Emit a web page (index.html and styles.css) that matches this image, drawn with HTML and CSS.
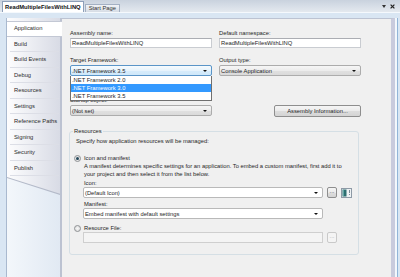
FILE: index.html
```html
<!DOCTYPE html>
<html lang="en">
<head>
    <meta charset="UTF-8">
    <meta name="viewport" content="width=device-width, initial-scale=1.0">
    <title>ReadMultipleFilesWithLINQ - Application</title>
    <link rel="stylesheet" href="styles.css">
</head>
<body>
    <div class="doc-tabs">
        <div class="doc-tab active">ReadMultipleFilesWithLINQ</div>
        <div class="doc-tab">Start Page</div>
        <div class="tab-tools">
            <svg width="4" height="3" viewBox="0 0 4 3"><path d="M0 0h4L2 3z" fill="#333"/></svg>
            <svg width="5" height="5" viewBox="0 0 5 5"><path d="M0.6 0.6l3.8 3.8M4.4 0.6l-3.8 3.8" stroke="#222" stroke-width="1.2"/></svg>
        </div>
    </div>

    <div class="frame">
        <div class="editor">
            <div class="nav">
                <ul class="nav-items">
                    <li class="selected">Application</li>
                    <li>Build</li>
                    <li>Build Events</li>
                    <li>Debug</li>
                    <li>Resources</li>
                    <li>Settings</li>
                    <li>Reference Paths</li>
                    <li>Signing</li>
                    <li>Security</li>
                    <li>Publish</li>
                </ul>
                <div class="nav-tail"></div>
            </div>

            <div class="panel">
                <div class="form-row">
                    <div class="field">
                        <div class="label">Assembly name:</div>
                        <div class="textbox">ReadMultipleFilesWithLINQ</div>
                    </div>
                    <div class="field">
                        <div class="label">Default namespace:</div>
                        <div class="textbox">ReadMultipleFilesWithLINQ</div>
                    </div>
                </div>

                <div class="form-row r2">
                    <div class="field">
                        <div class="label">Target Framework:</div>
                        <div class="combo-wrap">
                            <div class="combo focused"><span>.NET Framework 3.5</span><i class="arrow"></i></div>
                            <!-- open list -->
                            <ul class="dropdown">
                                <li>.NET Framework 2.0</li>
                                <li class="hot">.NET Framework 3.0</li>
                                <li>.NET Framework 3.5</li>
                            </ul>
                        </div>
                    </div>
                    <div class="field">
                        <div class="label">Output type:</div>
                        <div class="combo"><span>Console Application</span><i class="arrow"></i></div>
                    </div>
                </div>

                <div class="form-row r3">
                    <div class="field">
                        <div class="label">Startup object:</div>
                        <div class="combo"><span>(Not set)</span><i class="arrow"></i></div>
                    </div>
                    <div class="btn info-btn">Assembly Information...</div>
                </div>

                <fieldset class="group">
                    <legend>Resources</legend>
                    <div class="hint">Specify how application resources will be managed:</div>

                    <div class="radio-row">
                        <span class="radio checked"></span>
                        <span>Icon and manifest</span>
                    </div>
                    <div class="sub">
                        <p>A manifest determines specific settings for an application. To embed a custom manifest, first add it to<br>your project and then select it from the list below.</p>
                        <div class="label first">Icon:</div>
                        <div class="pick-row">
                            <div class="combo white"><span>(Default Icon)</span><i class="arrow"></i></div>
                            <div class="btn small">...</div>
                            <svg class="icon-preview" width="11" height="10" viewBox="0 0 11 10">
                                <rect x="0.5" y="0.5" width="10" height="9" fill="#eef2f4" stroke="#8e9aa6"/>
                                <rect x="1.5" y="1.5" width="4" height="7" fill="#2c6e70"/>
                                <rect x="2" y="2" width="1" height="6" fill="#5fa3a3"/>
                                <rect x="8" y="2" width="1" height="3" fill="#7a8a96"/>
                                <rect x="8" y="6" width="1" height="1" fill="#7a8a96"/>
                            </svg>
                        </div>
                        <div class="label second">Manifest:</div>
                        <div class="pick-row">
                            <div class="combo white"><span>Embed manifest with default settings</span><i class="arrow"></i></div>
                        </div>
                    </div>

                    <div class="radio-row second">
                        <span class="radio"></span>
                        <span>Resource File:</span>
                    </div>
                    <div class="sub">
                        <div class="pick-row">
                            <div class="textbox disabled"></div>
                            <div class="btn small disabled">...</div>
                        </div>
                    </div>
                </fieldset>
            </div>
        </div>
    </div>
</body>
</html>
```

FILE: styles.css
```css
* {
    box-sizing: border-box;
}

body {
    margin: 0;
    width: 400px;
    height: 277px;
    overflow: hidden;
    font-family: "Liberation Sans", Arial, sans-serif;
    font-size: 5.8px;
    color: #1e1e1e;
    background: #d9e6f3;
}

/* document tabs */
.doc-tabs {
    height: 12px;
    display: flex;
    align-items: flex-end;
    padding-left: 2px;
    background: linear-gradient(180deg, #c9d2de, #e4e9ef);
}

.doc-tab {
    height: 8px;
    line-height: 7px;
    padding: 0 3px;
    margin-left: 1px;
    border: 1px solid #a3b0c3;
    border-bottom: none;
    background: linear-gradient(180deg, #f1f3f6, #d6dce5);
    color: #333;
}

.doc-tab.active {
    height: 11px;
    line-height: 10px;
    margin-left: 0;
    padding: 0 2px;
    border-color: #8d9fb9;
    background: #fff;
    font-weight: bold;
    color: #111;
}

.tab-tools {
    margin-left: auto;
    align-self: center;
    display: flex;
    align-items: center;
    gap: 4px;
    padding-right: 5px;
}

/* frame */
.frame {
    height: 265px;
    padding: 5px 5px 0 6px;
    border-top: 1px solid #f5f9fd;
    background: #d9e6f3;
}

.editor {
    display: flex;
    height: 100%;
    box-shadow: 2px 0 0 #f3f7fc, 3px 0 0 #92b5d8;
}

/* left tabs */
.nav {
    flex: none;
    width: 56px;
    display: flex;
    flex-direction: column;
    background: linear-gradient(90deg, #f3f7fb, #e1e9f3);
    border-left: 1px solid #a9b9cf;
    border-right: 2px solid #bcc2d1;
}

.nav-items {
    list-style: none;
    margin: 0;
    padding: 3px 0 0;
    background: linear-gradient(90deg, #fdfdfe, #d8dbe5);
}

.nav-items li {
    height: 15.5px;
    line-height: 15px;
    padding-left: 7px;
    color: #2b2b2b;
    background: linear-gradient(#dcdee6, #dcdee6) 3px 100% / calc(100% - 4px) 1px no-repeat;
}

.nav-items li.selected {
    margin-right: -2px;
    line-height: 13.5px;
    background: #fff;
    border-top: 1px solid #c3c8d4;
    border-bottom: 1px solid #c3c8d4;
}

.nav-tail {
    height: 19px;
    position: relative;
    background: #b4bac9;
    clip-path: polygon(0 0, 100% 0, 100% 100%, 0 11%);
}

.nav-tail::before {
    content: '';
    position: absolute;
    inset: 0;
    background: linear-gradient(90deg, #fdfdfe, #d8dbe5);
    clip-path: polygon(0 0, 100% 0, 100% 94%, 0 5%);
}

/* main panel */
.panel {
    flex: 1;
    background: #f0f0f0;
    border-top: 1px solid #bcc3d2;
    border-right: 4px solid #c9cbdd;
    padding: 10px 30px 0 8px;
}

.form-row {
    display: grid;
    grid-template-columns: 1fr 1fr;
    column-gap: 7px;
}

.form-row.r2 {
    margin-top: 8px;
}

.form-row.r3 {
    margin-top: 20px;
}

.label {
    line-height: 8px;
    white-space: nowrap;
}

.textbox {
    height: 10px;
    margin-top: 1px;
    padding: 0 1px;
    line-height: 8px;
    background: #fff;
    border: 1px solid #c9ccd1;
    border-top-color: #abadb3;
}

.combo-wrap {
    position: relative;
}

.combo {
    height: 11px;
    margin-top: 1px;
    display: flex;
    align-items: center;
    justify-content: space-between;
    padding: 0 4px 0 1px;
    border: 1px solid #acacac;
    border-radius: 2px;
    background: linear-gradient(180deg, #f6f6f6, #ececec 50%, #e0e0e0 51%, #dadada);
    white-space: nowrap;
}

.combo.focused {
    border-color: #5a95c8;
    background: linear-gradient(180deg, #f6fbfe, #e6f3fc 50%, #d7ecfb 51%, #cfe8fa);
}

.combo.white {
    background: #fff;
    border-color: #b9b9b9;
}

.arrow {
    width: 0;
    height: 0;
    border-left: 2px solid transparent;
    border-right: 2px solid transparent;
    border-top: 2px solid #111;
}

.dropdown {
    position: absolute;
    top: 100%;
    left: 0;
    right: 0;
    z-index: 2;
    margin: 0;
    padding: 0;
    list-style: none;
    background: #fff;
    border: 1px solid #707070;
    border-top: none;
}

.dropdown li {
    height: 8px;
    line-height: 8px;
    padding-left: 1px;
}

.dropdown li.hot {
    background: #3399ff;
    color: #fff;
}

.btn {
    height: 12px;
    line-height: 10px;
    text-align: center;
    padding: 0 3px;
    border: 1px solid #8e8e8e;
    border-radius: 2px;
    background: linear-gradient(180deg, #f5f5f5, #ebebeb 50%, #dddddd 51%, #d4d4d4);
    white-space: nowrap;
}

.info-btn {
    width: 87px;
    justify-self: end;
    align-self: end;
    margin-bottom: -1px;
}

/* resources group */
.group {
    margin: 11px 2px 0 -1px;
    padding: 2px 0 11px 6px;
    min-width: 0;
    border: 1px solid #d5dfe5;
    border-radius: 3px;
}

.group legend {
    padding: 0 1px;
    margin-left: -3px;
    line-height: 8px;
}

.hint {
    line-height: 8px;
}

.radio-row {
    display: flex;
    align-items: center;
    gap: 3px;
    height: 8px;
    margin: 9px 0 0 -2px;
}

.radio-row.second {
    margin-top: 5px;
}

.radio {
    width: 7px;
    height: 7px;
    display: grid;
    place-items: center;
    border-radius: 50%;
    border: 1px solid #8f9294;
    background: radial-gradient(circle, #f8f8f8, #d6d6d6);
}

.radio.checked::after {
    content: '';
    width: 3px;
    height: 3px;
    border-radius: 50%;
    background: #25485a;
}

.sub {
    padding-left: 7px;
}

.sub p {
    margin: 0;
    padding-left: 1px;
    line-height: 8px;
    white-space: nowrap;
}

.sub .label {
    padding-left: 1px;
}

.sub .label.first {
    margin-top: 1px;
}

.sub .label.second {
    margin-top: 2px;
}

.pick-row {
    display: flex;
    align-items: center;
    gap: 4px;
}

.pick-row .combo {
    width: 240px;
    margin-top: 0;
}

.pick-row .textbox {
    width: 240px;
    height: 11px;
    margin-top: 0;
}

.textbox.disabled {
    background: #f4f4f4;
    border-color: #cfcfcf;
}

.btn.small {
    width: 10px;
    height: 11px;
    line-height: 7px;
    padding: 0;
}

.btn.disabled {
    color: #a6a6a6;
    border-color: #c9c9c9;
    background: #f4f4f4;
}

.icon-preview {
    flex: none;
}
```
